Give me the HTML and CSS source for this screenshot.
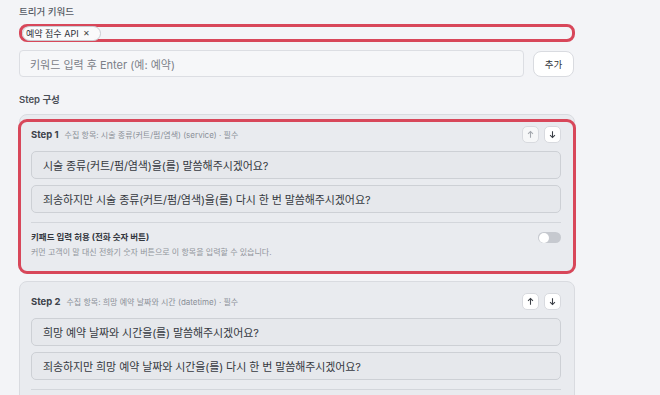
FILE: index.html
```html
<!DOCTYPE html>
<html lang="ko">
<head>
<meta charset="utf-8">
<link rel="stylesheet" href="styles.css">
</head>
<body>
<div class="page">
  <div class="label">트리거 키워드</div>
  <div class="chips hl">
    <span class="chip">예약 접수 API <span class="x">✕</span></span>
  </div>
  <div class="add-row">
    <div class="input">키워드 입력 후 Enter (예: 예약)</div>
    <button class="btn">추가</button>
  </div>
  <div class="label section">Step 구성</div>
  <div class="steps">
    <div class="card">
      <div class="hl-box"></div>
      <div class="card-head">
        <span class="step">Step 1</span>
        <span class="meta">수집 항목: 시술 종류(커트/펌/염색) (service) · 필수</span>
        <div class="arrows">
          <span class="arr dim"><svg viewBox="0 0 10 10" width="9" height="9"><path d="M5 8.5V1.8M2.3 4.3L5 1.6 7.7 4.3" fill="none" stroke="currentColor" stroke-width="1.2"/></svg></span>
          <span class="arr"><svg viewBox="0 0 10 10" width="9" height="9"><path d="M5 1.5V8.2M2.3 5.7L5 8.4 7.7 5.7" fill="none" stroke="currentColor" stroke-width="1.2"/></svg></span>
        </div>
      </div>
      <div class="msg">시술 종류(커트/펌/염색)을(를) 말씀해주시겠어요?</div>
      <div class="msg">죄송하지만 시술 종류(커트/펌/염색)을(를) 다시 한 번 말씀해주시겠어요?</div>
      <div class="opt">
        <div class="opt-text">
          <div class="opt-title">키패드 입력 허용 (전화 숫자 버튼)</div>
          <div class="opt-desc">커먼 고객이 말 대신 전화기 숫자 버튼으로 이 항목을 입력할 수 있습니다.</div>
        </div>
        <span class="toggle"><span class="knob"></span></span>
      </div>
    </div>
    <div class="card">
      <div class="card-head">
        <span class="step">Step 2</span>
        <span class="meta">수집 항목: 희망 예약 날짜와 시간 (datetime) · 필수</span>
        <div class="arrows">
          <span class="arr"><svg viewBox="0 0 10 10" width="9" height="9"><path d="M5 8.5V1.8M2.3 4.3L5 1.6 7.7 4.3" fill="none" stroke="currentColor" stroke-width="1.2"/></svg></span>
          <span class="arr"><svg viewBox="0 0 10 10" width="9" height="9"><path d="M5 1.5V8.2M2.3 5.7L5 8.4 7.7 5.7" fill="none" stroke="currentColor" stroke-width="1.2"/></svg></span>
        </div>
      </div>
      <div class="msg">희망 예약 날짜와 시간을(를) 말씀해주시겠어요?</div>
      <div class="msg">죄송하지만 희망 예약 날짜와 시간을(를) 다시 한 번 말씀해주시겠어요?</div>
      <div class="opt"></div>
    </div>
  </div>
</div>
</body>
</html>
```
FILE: styles.css
```css
html, body {
  margin: 0;
  padding: 0;
  background: #f3f4f7;
  font-family: "Inter", "Noto Sans CJK KR", sans-serif;
  color: #2b2f36;
  overflow: hidden;
}
.page {
  width: 556px;
  padding: 5px 0 0 19px;
}
.label {
  font-size: 9.5px;
  line-height: 14px;
  color: #555a63;
  font-weight: 500;
}
.label.section {
  margin-top: 16px;
  color: #4a4f57;
  font-weight: 600;
}
.hl {
  border: 3px solid #d8475a;
  border-radius: 8px;
}
.chips {
  margin-top: 5px;
  height: 12px;
  display: flex;
  align-items: center;
}
.chip {
  display: inline-flex;
  align-items: center;
  height: 13px;
  padding: 0 10px 0 3px;
  background: #fafafb;
  border: 1px solid #c9ccd2;
  border-radius: 8px;
  font-size: 9px;
  color: #2f333a;
}
.chip .x {
  font-size: 7.5px;
  margin-left: 4px;
  color: #444;
}
.add-row {
  display: flex;
  align-items: center;
  gap: 9px;
  margin-top: 8px;
}
.input {
  flex: 0 0 505px;
  height: 27px;
  box-sizing: border-box;
  border: 1px solid #dcdee3;
  border-radius: 4px;
  background: #f6f7f9;
  font-size: 11px;
  color: #7b8088;
  padding: 0 0 0 10px;
  display: flex;
  align-items: center;
}
.btn {
  width: 41px;
  height: 26px;
  border: 1px solid #d9dbe0;
  border-radius: 8px;
  background: #fff;
  font-family: inherit;
  font-size: 9.5px;
  color: #2f333a;
  padding: 0;
}
.steps {
  margin-top: 7px;
  display: flex;
  flex-direction: column;
  gap: 7px;
}
.card {
  position: relative;
  box-sizing: border-box;
  width: 556px;
  background: #e9ebef;
  border: 1px solid #d9dbe0;
  border-radius: 8px;
  padding: 0 13px 10px 11px;
}
.hl-box {
  position: absolute;
  left: -2px;
  top: 4px;
  right: -2px;
  bottom: -1px;
  border: 3px solid #d8475a;
  border-radius: 9px;
  pointer-events: none;
}
.card-head {
  display: flex;
  align-items: center;
  height: 17px;
  margin-top: 11px;
}
.step {
  font-size: 9.5px;
  font-weight: 700;
  color: #3d424a;
}
.meta {
  font-size: 8px;
  color: #8a8f97;
  margin-left: 6px;
}
.arrows {
  margin-left: auto;
  display: flex;
  gap: 5px;
}
.arr {
  width: 17px;
  height: 17px;
  box-sizing: border-box;
  border: 1px solid #d8dadf;
  border-radius: 5px;
  background: #fff;
  display: flex;
  align-items: center;
  justify-content: center;
  color: #3a3e45;
}
.arr.dim {
  background: #f6f7f8;
  color: #a4a8ae;
}
.msg {
  margin-top: 6px;
  height: 28px;
  box-sizing: border-box;
  border: 1px solid #cdd0d5;
  border-radius: 5px;
  background: #e6e8ec;
  font-size: 11px;
  letter-spacing: -0.1px;
  color: #353940;
  display: flex;
  align-items: center;
  padding-left: 11px;
}
.card-head + .msg {
  margin-top: 8px;
}
.opt {
  margin-top: 9px;
  border-top: 1px solid #d3d6db;
  display: flex;
  align-items: flex-start;
  padding-top: 7px;
  min-height: 33px;
}
.opt-title {
  font-size: 8.5px;
  font-weight: 700;
  color: #33373e;
  line-height: 14px;
}
.opt-desc {
  font-size: 8px;
  color: #90949b;
  line-height: 13px;
  margin-top: 2px;
}
.toggle {
  margin-left: auto;
  margin-top: 2px;
  width: 21px;
  height: 11px;
  border-radius: 6px;
  background: #c6c9cf;
  display: flex;
  align-items: center;
  padding: 0 1px;
}
.knob {
  width: 10px;
  height: 10px;
  border-radius: 50%;
  background: #fff;
}
```
